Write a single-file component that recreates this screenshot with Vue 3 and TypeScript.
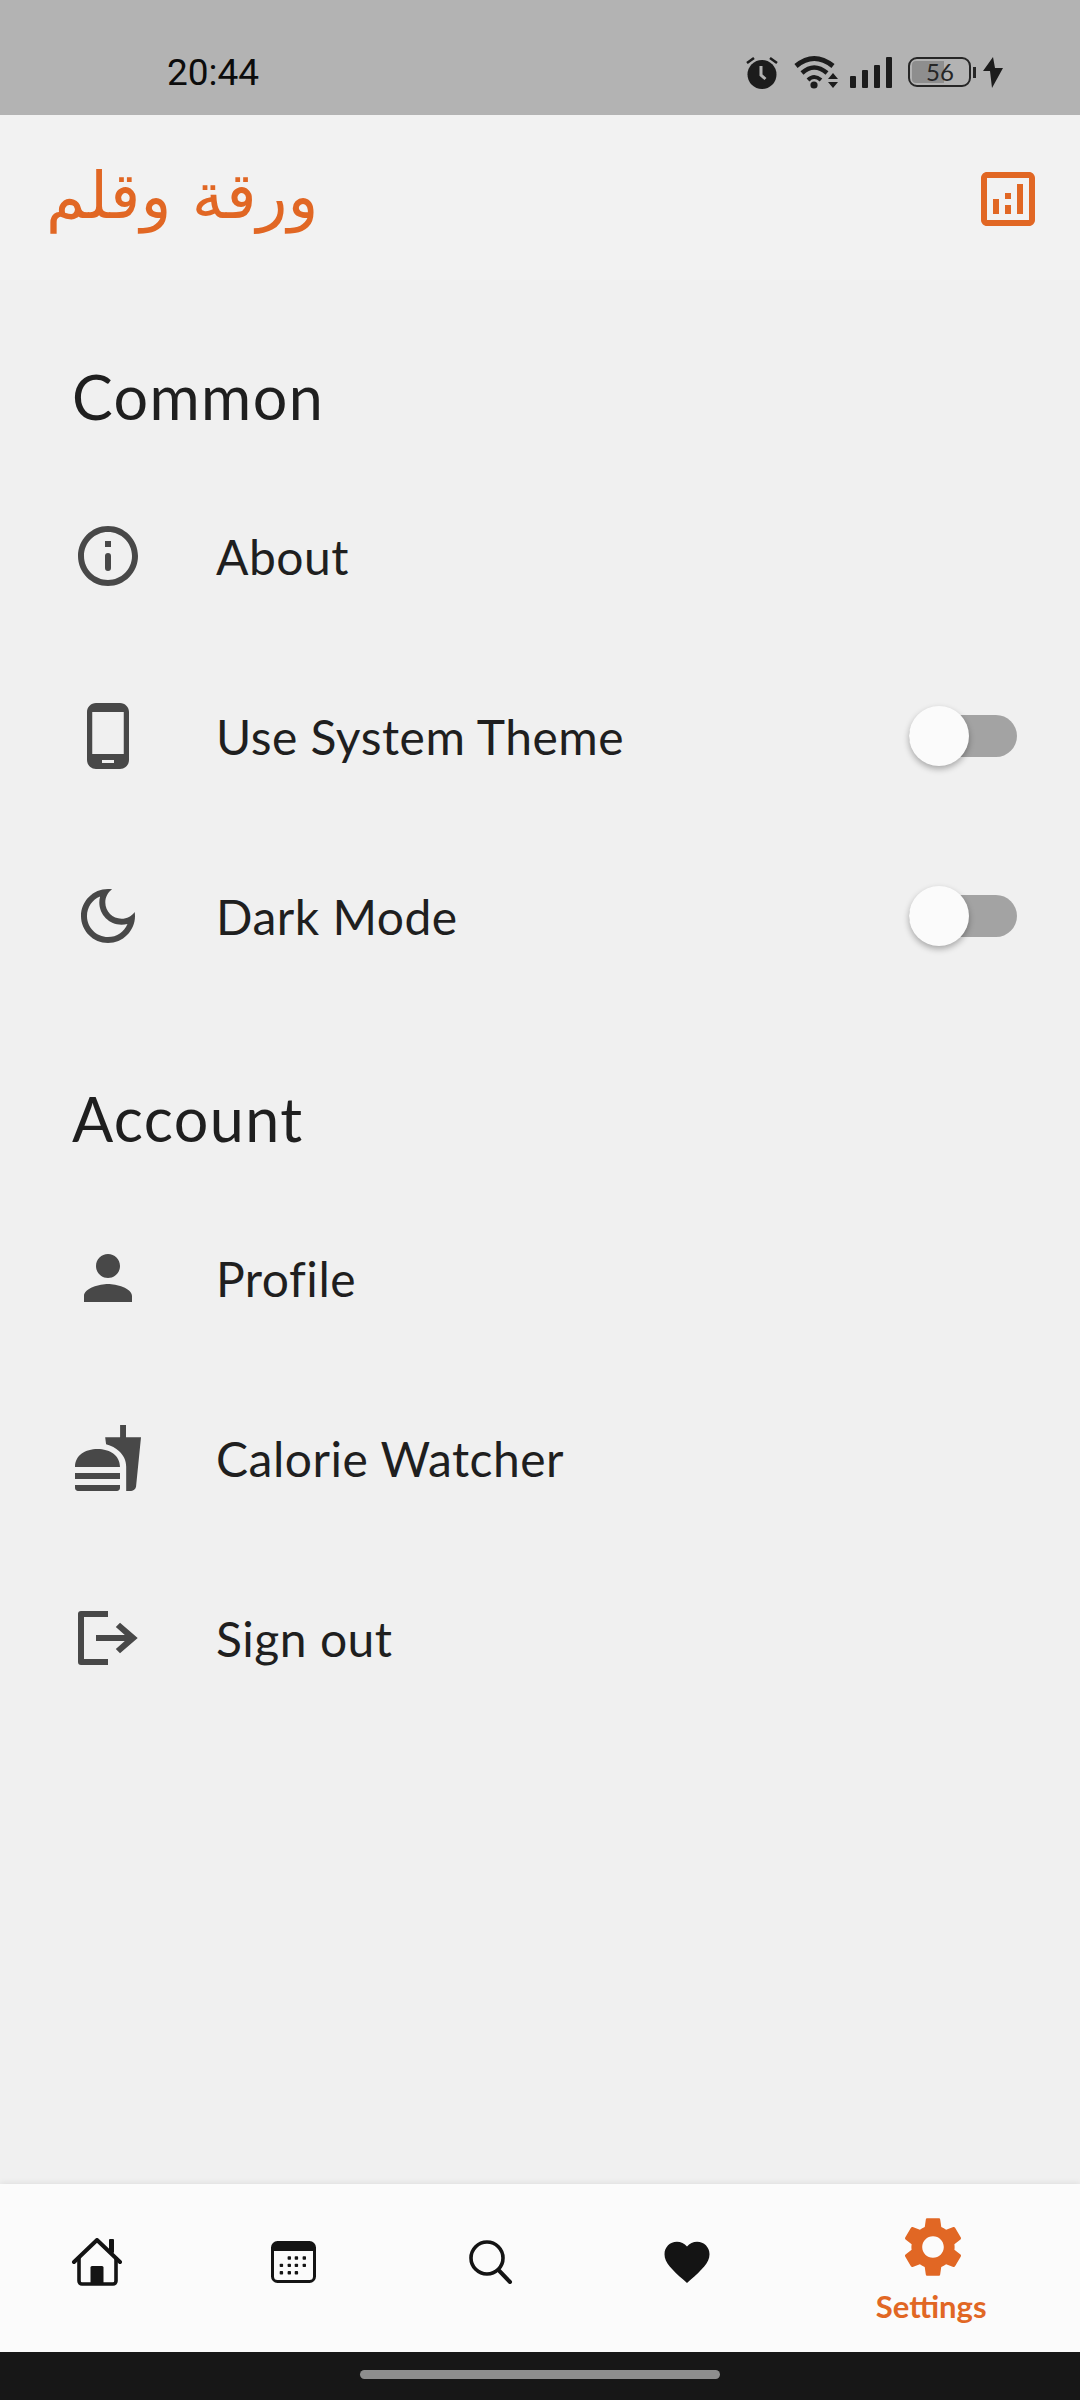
<script setup lang="ts">
interface Row {
  label: string;
  icon: string;
  toggle?: boolean;
}

interface Section {
  title: string;
  rows: Row[];
}

const icons: Record<string, string> = {
  info: 'M11 7h2v2h-2zM12 11a1 1 0 0 1 1 1v4a1 1 0 0 1-2 0v-4a1 1 0 0 1 1-1zM12 2C6.48 2 2 6.48 2 12s4.48 10 10 10 10-4.48 10-10S17.52 2 12 2zm0 18c-4.41 0-8-3.59-8-8s3.59-8 8-8 8 3.59 8 8-3.59 8-8 8z',
  phone: 'M16 1H8C6.34 1 5 2.34 5 4v16c0 1.66 1.34 3 3 3h8c1.66 0 3-1.34 3-3V4c0-1.66-1.34-3-3-3zm-2 20h-4v-1h4v1zm3.25-3H6.75V4h10.5v14z',
  moon: 'M9.37 5.51c-.18.64-.27 1.31-.27 1.99 0 4.08 3.32 7.4 7.4 7.4.68 0 1.35-.09 1.99-.27C17.45 17.19 14.93 19 12 19c-3.86 0-7-3.14-7-7 0-2.93 1.81-5.45 4.37-6.49zM12 3c-4.97 0-9 4.03-9 9s4.03 9 9 9 9-4.03 9-9c0-.46-.04-.92-.1-1.36-.98 1.37-2.58 2.26-4.4 2.26-2.98 0-5.4-2.42-5.4-5.4 0-1.81.89-3.42 2.26-4.4-.44-.06-.9-.1-1.36-.1z',
  person: 'M12 12c2.21 0 4-1.79 4-4s-1.79-4-4-4-4 1.79-4 4 1.79 4 4 4zm0 2c-2.67 0-8 1.34-8 4v2h16v-2c0-2.66-5.33-4-8-4z',
  food: 'M18.06 23h1.66c.84 0 1.53-.64 1.63-1.46L23 5.05h-5V1h-1.97v4.05h-4.97l.3 2.34c1.71.47 3.31 1.32 4.27 2.26 1.44 1.42 2.43 2.89 2.43 5.29V23zM1 22v-1h15v1c0 .55-.45 1-1 1H2c-.55 0-1-.45-1-1zM16 15c0-4-3.5-6-7.5-6S1 11 1 15h15zM1 17h15v2H1z',
  logout: 'M12 3H3a1 1 0 0 0-1 1v16a1 1 0 0 0 1 1h9v-2H4V5h8zM8 11h9.6l-3-2.7L16 6.9 21.9 12 16 17.1l-1.4-1.4 3-2.7H8z'
};

const sections: Section[] = [
  {
    title: 'Common',
    rows: [
      { label: 'About', icon: 'info' },
      { label: 'Use System Theme', icon: 'phone', toggle: true },
      { label: 'Dark Mode', icon: 'moon', toggle: true }
    ]
  },
  {
    title: 'Account',
    rows: [
      { label: 'Profile', icon: 'person' },
      { label: 'Calorie Watcher', icon: 'food' },
      { label: 'Sign out', icon: 'logout' }
    ]
  }
];

const calendarDots: [number, number][] = [
  [18.3, 17], [25.4, 17], [33.3, 17],
  [10.4, 24.4], [18.3, 24.4], [25.4, 24.4], [33.3, 24.4],
  [10.4, 31.8], [18.3, 31.8], [25.4, 31.8]
];
</script>

<template>
  <div class="screen">
    <header class="status">
      <span class="status__time">20:44</span>
      <div class="status__icons">
        <svg class="alarm" width="32" height="33" viewBox="0 0 32 33">
          <circle cx="16" cy="18.5" r="14.5" fill="#1c1c1c" />
          <path d="M1 7l7-5M31 7l-7-5" stroke="#1c1c1c" stroke-width="2.6" fill="none" />
          <path d="M15 10v9l4.5 4" stroke="#b3b3b3" stroke-width="3" fill="none" />
        </svg>
        <svg class="wifi" width="45" height="36" viewBox="0 0 45 36">
          <path d="M2 12Q20-3 39 12" stroke="#1c1c1c" stroke-width="5" fill="none" />
          <path d="M8 19Q20 8 33 19" stroke="#1c1c1c" stroke-width="4.5" fill="none" />
          <path d="M14 26Q20 20 27 26" stroke="#1c1c1c" stroke-width="4" fill="none" />
          <circle cx="20" cy="31" r="3.6" fill="#1c1c1c" />
          <path d="M39 19l5 6H34zM34 28h10l-5 6z" fill="#1c1c1c" />
        </svg>
        <svg class="signal" width="43" height="31" viewBox="0 0 43 31">
          <rect x="1" y="19" width="6" height="12" rx="1" />
          <rect x="13" y="13" width="6" height="18" rx="1" />
          <rect x="25" y="8" width="6" height="23" rx="1" />
          <rect x="37" y="0" width="6" height="31" rx="1" />
        </svg>
        <div class="battery">
          <div class="battery__body">
            <div class="battery__level"></div>
            <span class="battery__text">56</span>
          </div>
          <div class="battery__nub"></div>
        </div>
        <svg class="bolt" width="20" height="31" viewBox="0 0 20 31">
          <path d="M10 0L0 14h7l2 17 11-20h-8z" fill="#1c1c1c" />
        </svg>
      </div>
    </header>

    <div class="topbar">
      <span class="topbar__logo" dir="rtl" lang="ar">ورقة وقلم</span>
      <svg class="icon topbar__stats" viewBox="0 0 24 24">
        <path d="M19 3H5c-1.1 0-2 .9-2 2v14c0 1.1.9 2 2 2h14c1.1 0 2-.9 2-2V5c0-1.1-.9-2-2-2zm0 16H5V5h14v14zM7 12h2v5H7zm8-5h2v10h-2zm-4 7h2v3h-2zm0-4h2v2h-2z" />
      </svg>
    </div>

    <main class="content">
      <section v-for="section in sections" :key="section.title" class="group">
        <h2 class="group__title">{{ section.title }}</h2>
        <div v-for="row in section.rows" :key="row.label" class="row">
          <svg class="icon row__icon" viewBox="0 0 24 24">
            <path :d="icons[row.icon]" />
          </svg>
          <span class="row__label">{{ row.label }}</span>
          <div v-if="row.toggle" class="switch">
            <div class="switch__knob"></div>
          </div>
        </div>
      </section>
    </main>

    <nav class="tabs">
      <div class="tab">
        <svg class="tab__home" width="52" height="48" viewBox="0 0 52 48" fill="none" stroke="#141414">
          <path d="M3 24L26 2l23 22" stroke-width="4" stroke-linecap="round" stroke-linejoin="round" />
          <path d="M8 19v24a3 3 0 0 0 3 3h31a3 3 0 0 0 3-3V19" stroke-width="3.6" />
          <rect x="38" y="1" width="5" height="14" rx="1" fill="#141414" stroke="none" />
          <rect x="19.5" y="28" width="13" height="18" rx="1.5" fill="#141414" stroke="none" />
        </svg>
      </div>
      <div class="tab">
        <svg class="tab__calendar" width="45" height="42" viewBox="0 0 45 42">
          <rect x="1.5" y="1.5" width="42" height="39" rx="5" fill="none" stroke="#141414" stroke-width="3" />
          <path d="M2 10V6a4 4 0 0 1 4-4h33a4 4 0 0 1 4 4v4z" fill="#141414" />
          <rect v-for="(d, i) in calendarDots" :key="i" :x="d[0] - 1.7" :y="d[1] - 1.7" width="3.4" height="3.4" rx="0.8" fill="#141414" />
        </svg>
      </div>
      <div class="tab">
        <svg width="44" height="44" viewBox="0 0 44 44" fill="none" stroke="#141414">
          <circle cx="18" cy="18" r="16" stroke-width="3.6" />
          <path d="M29.5 30L41 42" stroke-width="4" stroke-linecap="round" />
        </svg>
      </div>
      <div class="tab">
        <svg width="54" height="54" viewBox="0 0 24 24">
          <path d="M12 21.35l-1.45-1.32C5.4 15.36 2 12.28 2 8.5 2 5.42 4.42 3 7.5 3c1.74 0 3.41.81 4.5 2.09C13.09 3.81 14.76 3 16.5 3 19.58 3 22 5.42 22 8.5c0 3.78-3.4 6.86-8.55 11.54L12 21.35z" fill="#141414" />
        </svg>
      </div>
      <div class="tab tab--active">
        <svg class="icon" viewBox="0 0 24 24">
          <path d="M19.14 12.94c.04-.3.06-.61.06-.94 0-.32-.02-.64-.07-.94l2.03-1.58c.18-.14.23-.41.12-.61l-1.92-3.32c-.12-.22-.37-.29-.59-.22l-2.39.96c-.5-.38-1.03-.7-1.62-.94l-.36-2.54c-.04-.24-.24-.41-.48-.41h-3.84c-.24 0-.43.17-.47.41l-.36 2.54c-.59.24-1.13.57-1.62.94l-2.39-.96c-.22-.08-.47 0-.59.22L2.74 8.87c-.12.21-.08.47.12.61l2.03 1.58c-.05.3-.09.63-.09.94s.02.64.07.94l-2.03 1.58c-.18.14-.23.41-.12.61l1.92 3.32c.12.22.37.29.59.22l2.39-.96c.5.38 1.03.7 1.62.94l.36 2.54c.05.24.24.41.48.41h3.84c.24 0 .44-.17.47-.41l.36-2.54c.59-.24 1.13-.56 1.62-.94l2.39.96c.22.08.47 0 .59-.22l1.92-3.32c.12-.22.07-.47-.12-.61l-2.01-1.58zM12 15.6c-1.98 0-3.6-1.62-3.6-3.6s1.62-3.6 3.6-3.6 3.6 1.62 3.6 3.6-1.62 3.6-3.6 3.6z" />
        </svg>
        <span class="tab__label">Settings</span>
      </div>
    </nav>

    <footer class="gesture">
      <div class="gesture__bar"></div>
    </footer>
  </div>
</template>

<style scoped>
.screen {
  width: 1080px;
  height: 2400px;
  display: flex;
  flex-direction: column;
  background: #f0f0f0;
  color: #1f1f1f;
  font-family: Lato, "Liberation Sans", sans-serif;
  overflow: hidden;
}

.status {
  height: 115px;
  flex: none;
  box-sizing: border-box;
  padding: 54px 77px 0 167px;
  display: flex;
  justify-content: space-between;
  align-items: flex-start;
  background: #b3b3b3;
}

.status__time {
  font-family: Roboto, sans-serif;
  font-size: 37px;
  line-height: 38px;
  color: #0c0c0c;
}

.status__icons {
  display: flex;
  align-items: center;
  gap: 0;
  height: 36px;
}

.alarm {
  margin-right: 16px;
}

.wifi {
  margin-right: 10px;
}

.signal {
  fill: #1c1c1c;
  margin-right: 16px;
}

.battery {
  display: flex;
  align-items: center;
  margin-right: 7px;
}

.battery__body {
  position: relative;
  width: 63px;
  height: 30px;
  box-sizing: border-box;
  border: 2.5px solid #262626;
  border-radius: 9px;
  display: flex;
  align-items: center;
  justify-content: center;
}

.battery__level {
  position: absolute;
  left: 2px;
  top: 2px;
  bottom: 2px;
  width: 32px;
  background: #8e8e8e;
  border-radius: 4px 0 0 4px;
}

.battery__text {
  position: relative;
  margin-left: 1px;
  font-family: Lato, sans-serif;
  font-size: 24px;
  line-height: 24px;
  color: #262626;
}

.battery__nub {
  width: 3px;
  height: 11px;
  margin-left: 2px;
  background: #262626;
}

.icon {
  width: 72px;
  height: 72px;
  flex: none;
}

.topbar {
  height: 165px;
  flex: none;
  box-sizing: border-box;
  padding: 0 36px 0 46px;
  display: flex;
  align-items: center;
  justify-content: space-between;
  background: #f2f2f2;
}

.topbar__logo {
  font-family: "DejaVu Sans", sans-serif;
  font-size: 64px;
  line-height: 72px;
  color: #e16724;
  margin-bottom: 4px;
}

.topbar__stats {
  fill: #e16724;
  margin-top: 3px;
}

.content {
  flex: 1;
  padding-top: 4px;
}

.group {
  padding-top: 78px;
}

.group__title {
  margin: 0 0 34px 72px;
  font-size: 61px;
  line-height: 70px;
  font-weight: 400;
  letter-spacing: 1.4px;
  color: #1f1f1f;
}

.row {
  height: 180px;
  box-sizing: border-box;
  padding: 0 63px 0 72px;
  display: flex;
  align-items: center;
  gap: 72px;
}

.row__icon {
  fill: #484848;
}

.row__label {
  flex: 1;
  margin-top: 2px;
  font-size: 48px;
  line-height: 60px;
  letter-spacing: 0.5px;
}

.switch {
  position: relative;
  width: 108px;
  height: 42px;
  background: #a3a3a3;
  border-radius: 21px;
}

.switch__knob {
  position: absolute;
  left: 0;
  top: -9px;
  width: 60px;
  height: 60px;
  border-radius: 50%;
  background: #fbfbfb;
  box-shadow: 0 3px 6px rgba(0, 0, 0, 0.3);
}

.tabs {
  height: 168px;
  flex: none;
  display: grid;
  grid-template-columns: 1fr 1fr 1fr 1fr 1.5fr;
  background: #fbfbfb;
  box-shadow: 0 -1px 6px rgba(0, 0, 0, 0.08);
}

.tab {
  display: flex;
  flex-direction: column;
  align-items: center;
  justify-content: center;
  padding-bottom: 12px;
}

.tab__home {
  margin-right: 2px;
}

.tab__calendar {
  margin-right: 3px;
}

.tab--active {
  fill: #e16724;
  padding-bottom: 0;
}

.tab__label {
  margin-top: 4px;
  margin-right: 3px;
  font-size: 31px;
  line-height: 38px;
  font-weight: 700;
  color: #e16724;
}

.gesture {
  height: 48px;
  flex: none;
  background: #171717;
  display: flex;
  justify-content: center;
  padding-top: 18px;
  box-sizing: border-box;
}

.gesture__bar {
  width: 360px;
  height: 9px;
  border-radius: 5px;
  background: #8e8e8e;
}
</style>
